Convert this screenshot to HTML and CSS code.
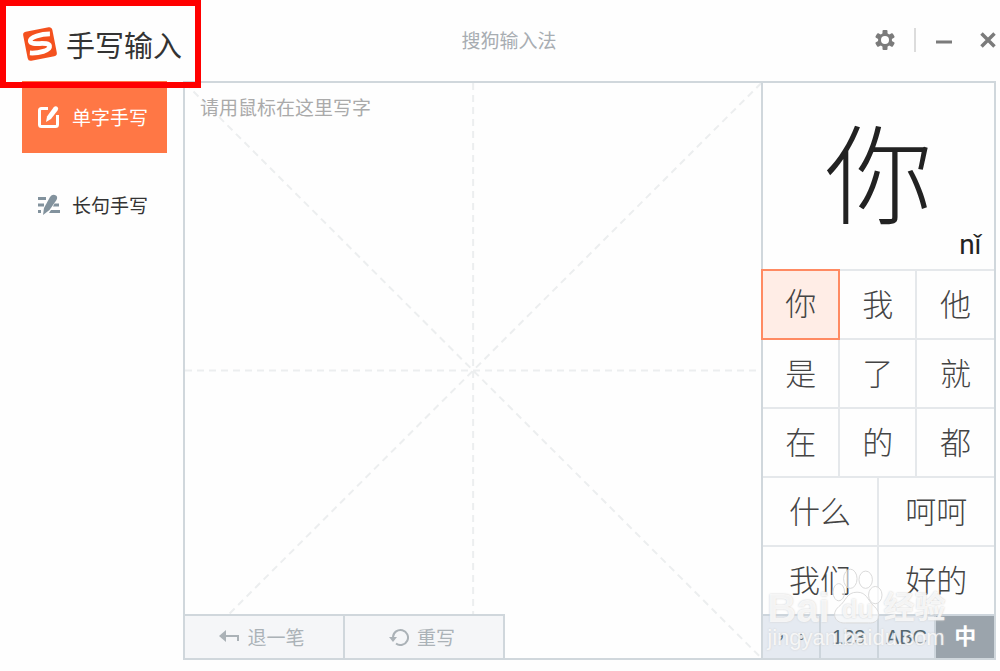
FILE: index.html
```html
<!DOCTYPE html>
<html lang="zh-CN">
<head>
    <meta charset="UTF-8">
    <meta name="viewport" content="width=device-width, initial-scale=1.0">
    <title>搜狗输入法 - 手写输入</title>
    <link rel="stylesheet" href="styles.css">
</head>
<body>
    <div class="app">
        <header class="titlebar">
            <div class="brand">
                <svg class="brand-logo" viewBox="0 0 34 34" aria-hidden="true">
                    <g transform="rotate(-11 17 17)">
                        <rect x="3" y="3" width="28" height="28" rx="3" fill="#f4511e"/>
                        <path d="M28 9.500C20 8 9 8.500 8.500 12.500C8 17.500 25.500 15.500 25.500 20.500C25.500 25 14 25.500 6 23.500" fill="none" stroke="#fff" stroke-width="4.500"/>
                    </g>
                </svg>
                <h1 class="brand-name">手写输入</h1>
            </div>
            <div class="app-name">搜狗输入法</div>
            <div class="window-tools">
                <button class="tool-btn" aria-label="设置">
                    <svg width="20" height="20" viewBox="0 0 20 20">
                        <g fill="#7b7b7b">
                            <rect x="7.500" y="0" width="5" height="20" rx="1"/>
                            <rect x="7.500" y="0" width="5" height="20" rx="1" transform="rotate(60 10 10)"/>
                            <rect x="7.500" y="0" width="5" height="20" rx="1" transform="rotate(120 10 10)"/>
                            <circle cx="10" cy="10" r="7"/>
                        </g>
                        <circle cx="10" cy="10" r="4" fill="#fff"/>
                    </svg>
                </button>
                <span class="divider"></span>
                <button class="tool-btn" aria-label="最小化">
                    <svg width="18" height="18" viewBox="0 0 18 18"><path d="M1 11h16" stroke="#7b7b7b" stroke-width="3"/></svg>
                </button>
                <button class="tool-btn close-btn" aria-label="关闭">
                    <svg width="16" height="16" viewBox="0 0 16 16"><path d="M1.500 1.500L14.500 14.500M14.500 1.500L1.500 14.500" stroke="#7b7b7b" stroke-width="3.500"/></svg>
                </button>
            </div>
        </header>

        <div class="workspace">
            <nav class="sidebar">
                <button class="nav-btn active">
                    <svg width="24" height="24" viewBox="0 0 24 24" fill="none" stroke="#fff" stroke-width="3">
                        <path d="M11 3.500H4.500Q2.500 3.500 2.500 5.500V19.500Q2.500 21.500 4.500 21.500H18.500Q20.500 21.500 20.500 19.500V10"/>
                        <path d="M9 17L10 11.500L16.500 2.500Q18.500 .500 20.500 2Q22 3.500 20.500 5.500L14 14Z" fill="#fff" stroke="none"/>
                    </svg>
                    单字手写
                </button>
                <button class="nav-btn">
                    <svg width="24" height="24" viewBox="0 0 24 24" fill="#82929d">
                        <path d="M1 4H9V7H1ZM1 10.500H7V13.500H1ZM1 17H4V20H1ZM17.500 10.500H22V13.500H16ZM14 17H23V20H12Z"/>
                        <path d="M6 22L7 15L13 4Q15.500 .500 19 2.500Q21 4 19.500 7L12.500 17Z"/>
                    </svg>
                    长句手写
                </button>
            </nav>

            <main class="panel">
                <section class="pad">
                    <svg class="pad-guides" viewBox="0 0 100 100" preserveAspectRatio="none" aria-hidden="true">
                        <path d="M0 0L100 100M100 0L0 100M50 0V100M0 50H100" vector-effect="non-scaling-stroke"/>
                    </svg>
                    <p class="pad-hint">请用鼠标在这里写字</p>
                    <div class="pad-actions">
                        <button class="pad-btn">
                            <svg width="20" height="16" viewBox="0 0 20 16"><path d="M0 7L7 1V13Z" fill="#abb2b7"/><path d="M6 7H19V12" fill="none" stroke="#abb2b7" stroke-width="2"/></svg>
                            退一笔
                        </button>
                        <button class="pad-btn">
                            <svg width="20" height="18" viewBox="0 0 20 18"><path d="M4 9A7.500 7.500 0 1 1 7 15.500" fill="none" stroke="#abb2b7" stroke-width="2"/><path d="M0 9H8L4 14Z" fill="#abb2b7"/></svg>
                            重写
                        </button>
                    </div>
                </section>

                <aside class="result">
                    <div class="preview">
                        <div class="preview-char">你</div>
                        <div class="preview-pinyin">nǐ</div>
                    </div>
                    <div class="candidates">
                        <button class="word selected">你</button>
                        <button class="word">我</button>
                        <button class="word">他</button>
                        <button class="word">是</button>
                        <button class="word">了</button>
                        <button class="word">就</button>
                        <button class="word">在</button>
                        <button class="word">的</button>
                        <button class="word">都</button>
                        <button class="word phrase">什么</button>
                        <button class="word phrase">呵呵</button>
                        <button class="word phrase">我们</button>
                        <button class="word phrase">好的</button>
                    </div>
                    <div class="modes">
                        <button class="mode punctuation" lang="zh-TW">，。</button>
                        <button class="mode">123</button>
                        <button class="mode">ABC</button>
                        <button class="mode current">中</button>
                    </div>
                    <div class="watermark">
                        <div class="wm-brand">
                            <span>Bai</span>
                            <span class="wm-paw">
                                <svg viewBox="0 0 50 60" aria-hidden="true">
                                    <ellipse cx="5" cy="25" rx="6" ry="9"/>
                                    <ellipse cx="17" cy="11" rx="7" ry="10"/>
                                    <ellipse cx="33" cy="12" rx="7" ry="9"/>
                                    <ellipse cx="43" cy="28" rx="7" ry="9"/>
                                    <path d="M24 25C13 25 13 34 5 40C-4 48 2 58 12 57H36C48 58 50 46 41 39C35 33 34 25 24 25Z"/>
                                </svg>
                                <span class="wm-du">du</span>
                            </span>
                            <span class="wm-suffix">经验</span>
                        </div>
                        <div class="wm-url">jingyan.baidu.com</div>
                    </div>
                </aside>
            </main>
        </div>
        <div class="highlight"></div>
    </div>
</body>
</html>
```
FILE: styles.css
```css
* {
    box-sizing: border-box;
}

body {
    margin: 0;
    background: #fefefe;
    color: #333;
    font-family: "Noto Sans CJK SC", sans-serif;
}

button {
    margin: 0;
    padding: 0;
    border: none;
    background: none;
    color: inherit;
    font-family: inherit;
    cursor: pointer;
}

svg {
    display: block;
    flex: none;
}

.app {
    position: relative;
    display: flex;
    flex-direction: column;
    min-height: 100vh;
    padding: 0 4px 11px 22px;
}

.titlebar {
    display: grid;
    grid-template-columns: 1fr auto 1fr;
    align-items: center;
    height: 81px;
    padding-bottom: 2px;
}

.brand {
    display: flex;
    align-items: center;
    gap: 8px;
    padding-top: 8px;
}

.brand-logo {
    width: 36px;
    height: 36px;
}

.brand-name {
    margin: 0;
    font-size: 29px;
    line-height: 36px;
    font-weight: 400;
}

.app-name {
    color: #a8adb2;
    font-size: 19px;
    line-height: 24px;
}

.window-tools {
    display: flex;
    justify-content: flex-end;
    align-items: center;
    gap: 19px;
}

.divider {
    width: 2px;
    height: 24px;
    background: #dcdcdc;
}

.close-btn {
    padding-left: 8px;
}

.workspace {
    display: flex;
    flex: 1;
    gap: 16px;
}

.sidebar {
    display: flex;
    flex-direction: column;
    gap: 16px;
    width: 145px;
}

.nav-btn {
    display: flex;
    align-items: center;
    gap: 11px;
    height: 72px;
    padding-left: 15px;
    font-size: 19px;
    line-height: 24px;
}

.nav-btn.active {
    background: #ff7745;
    color: #fff;
}

.panel {
    display: grid;
    grid-template-columns: 577fr 233fr;
    flex: 1;
    border: 2px solid #d0d7dc;
}

.pad {
    position: relative;
    display: flex;
    flex-direction: column;
    justify-content: space-between;
    align-items: flex-start;
}

.pad-guides {
    position: absolute;
    inset: 0;
    width: 100%;
    height: 100%;
    fill: none;
    stroke: #eceeef;
    stroke-width: 2;
    stroke-dasharray: 7 5;
}

.pad-hint {
    position: relative;
    margin: 11px 15px;
    color: #aaa;
    font-size: 19px;
    line-height: 26px;
}

.pad-actions {
    position: relative;
    display: flex;
    border-top: 2px solid #d0d7dc;
    background: #f5f6f8;
}

.pad-btn {
    display: flex;
    justify-content: center;
    align-items: center;
    gap: 8px;
    width: 160px;
    height: 42px;
    padding-right: 4px;
    border-right: 2px solid #d0d7dc;
    color: #abb2b7;
    font-size: 19px;
    line-height: 24px;
}

.result {
    position: relative;
    display: flex;
    flex-direction: column;
    border-left: 2px solid #d0d7dc;
}

.preview {
    position: relative;
    flex: 1;
    display: flex;
    justify-content: center;
    align-items: center;
    padding-bottom: 14px;
    color: #222;
}

.preview-char {
    font-size: 108px;
    line-height: 120px;
    font-weight: 300;
}

.preview-pinyin {
    position: absolute;
    right: 13px;
    bottom: 8px;
    font-family: Roboto, sans-serif;
    font-size: 28px;
    line-height: 32px;
}

.candidates {
    display: grid;
    grid-template-columns: repeat(6, 1fr);
}

.word {
    grid-column: span 2;
    height: 69px;
    padding-bottom: 4px;
    border-top: 2px solid #e5e8eb;
    border-right: 2px solid #e5e8eb;
    color: #444;
    font-size: 31px;
    line-height: 40px;
    font-weight: 300;
}

.phrase {
    grid-column: span 3;
}

.word:nth-child(3n):not(.phrase),
.phrase:nth-child(odd) {
    border-right: none;
}

/* covers the dividers on every side of the cell */
.word.selected {
    height: 71px;
    margin: 0 0 -2px -2px;
    padding-bottom: 6px;
    border: 2px solid #ff8a62;
    background: #ffede6;
    z-index: 1;
}

.modes {
    display: grid;
    grid-template-columns: repeat(4, 1fr);
    border-top: 2px solid #cdd5dc;
}

.mode {
    height: 42px;
    border-right: 2px solid #cdd5dc;
    background: #e5eaf1;
    color: #53666f;
    font-family: "Liberation Sans", "Noto Sans CJK SC", sans-serif;
    font-size: 20px;
    line-height: 24px;
}

.mode.punctuation {
    font-family: "Noto Sans CJK TC", sans-serif;
}

.mode.current {
    border-right: none;
    background: #9ba4ac;
    color: #fff;
    font-size: 22px;
    font-weight: 700;
}

.watermark {
    position: absolute;
    left: 4px;
    bottom: 8px;
    color: rgba(255, 255, 255, 0.8);
    font-family: "Liberation Sans", "Noto Sans CJK SC", sans-serif;
    text-shadow: 0 0 2px #ccc;
    pointer-events: none;
    z-index: 2;
}

.wm-brand {
    display: flex;
    align-items: flex-end;
    gap: 4px;
    font-size: 40px;
    line-height: 36px;
    font-weight: 700;
}

.wm-paw {
    position: relative;
    width: 46px;
}

.wm-paw svg {
    width: 48px;
    height: 58px;
    overflow: visible;
    fill: rgba(255, 255, 255, 0.6);
    stroke: #d8d8d8;
}

.wm-du {
    position: absolute;
    left: 8px;
    bottom: 4px;
    font-size: 26px;
    line-height: 26px;
}

.wm-suffix {
    font-size: 31px;
}

.wm-url {
    font-size: 22px;
    line-height: 24px;
}

/* red frame around the brand */
.highlight {
    position: absolute;
    top: 0;
    left: 0;
    width: 201px;
    height: 88px;
    border: 6px solid #f00;
    pointer-events: none;
}
```
